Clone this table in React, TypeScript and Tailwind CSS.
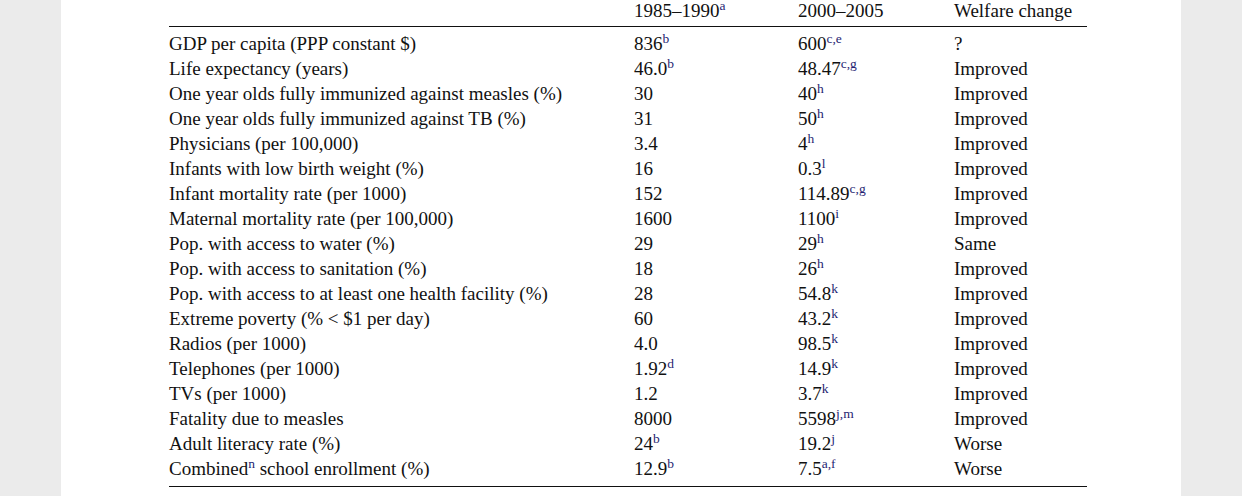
import React from "react"

type Cell = { v: string; s?: string }

const rows: { label: React.ReactNode; a: Cell; b: Cell; c: string }[] = [
  { label: "GDP per capita (PPP constant $)", a: { v: "836", s: "b" }, b: { v: "600", s: "c,e" }, c: "?" },
  { label: "Life expectancy (years)", a: { v: "46.0", s: "b" }, b: { v: "48.47", s: "c,g" }, c: "Improved" },
  { label: "One year olds fully immunized against measles (%)", a: { v: "30" }, b: { v: "40", s: "h" }, c: "Improved" },
  { label: "One year olds fully immunized against TB (%)", a: { v: "31" }, b: { v: "50", s: "h" }, c: "Improved" },
  { label: "Physicians (per 100,000)", a: { v: "3.4" }, b: { v: "4", s: "h" }, c: "Improved" },
  { label: "Infants with low birth weight (%)", a: { v: "16" }, b: { v: "0.3", s: "l" }, c: "Improved" },
  { label: "Infant mortality rate (per 1000)", a: { v: "152" }, b: { v: "114.89", s: "c,g" }, c: "Improved" },
  { label: "Maternal mortality rate (per 100,000)", a: { v: "1600" }, b: { v: "1100", s: "i" }, c: "Improved" },
  { label: "Pop. with access to water (%)", a: { v: "29" }, b: { v: "29", s: "h" }, c: "Same" },
  { label: "Pop. with access to sanitation (%)", a: { v: "18" }, b: { v: "26", s: "h" }, c: "Improved" },
  { label: "Pop. with access to at least one health facility (%)", a: { v: "28" }, b: { v: "54.8", s: "k" }, c: "Improved" },
  { label: "Extreme poverty (% < $1 per day)", a: { v: "60" }, b: { v: "43.2", s: "k" }, c: "Improved" },
  { label: "Radios (per 1000)", a: { v: "4.0" }, b: { v: "98.5", s: "k" }, c: "Improved" },
  { label: "Telephones (per 1000)", a: { v: "1.92", s: "d" }, b: { v: "14.9", s: "k" }, c: "Improved" },
  { label: "TVs (per 1000)", a: { v: "1.2" }, b: { v: "3.7", s: "k" }, c: "Improved" },
  { label: "Fatality due to measles", a: { v: "8000" }, b: { v: "5598", s: "j,m" }, c: "Improved" },
  { label: "Adult literacy rate (%)", a: { v: "24", s: "b" }, b: { v: "19.2", s: "j" }, c: "Worse" },
  {
    label: (
      <>
        Combined<Sup>n</Sup> school enrollment (%)
      </>
    ),
    a: { v: "12.9", s: "b" },
    b: { v: "7.5", s: "a,f" },
    c: "Worse",
  },
]

function Sup({ children }: { children: React.ReactNode }) {
  return <sup className="relative -top-[7px] align-baseline text-[13.5px] leading-none text-[#1f1f72]">{children}</sup>
}

function Value({ cell }: { cell: Cell }) {
  return (
    <span>
      {cell.v}
      {cell.s && <Sup>{cell.s}</Sup>}
    </span>
  )
}

const cols = "grid grid-cols-[465px_164px_156px_133px]"

export default function App() {
  return (
    <div className="flex h-[496px] w-full justify-center bg-[#ebebeb]">
      <div className="h-full w-[1120px] bg-white pl-[108px] font-['Liberation_Serif',serif] text-[19px] text-[#111]">
        <div className="w-[918px]">
          <div className={`${cols} border-b border-[#111] pb-[5px] leading-[21px]`}>
            <div />
            <div>
              1985–1990<Sup>a</Sup>
            </div>
            <div>2000–2005</div>
            <div>Welfare change</div>
          </div>
          <div className="border-b border-[#111] pt-[4px] pb-[5px]">
            {rows.map((r, i) => (
              <div key={i} className={`${cols} leading-[25px]`}>
                <div>{r.label}</div>
                <Value cell={r.a} />
                <Value cell={r.b} />
                <div>{r.c}</div>
              </div>
            ))}
          </div>
        </div>
      </div>
    </div>
  )
}
